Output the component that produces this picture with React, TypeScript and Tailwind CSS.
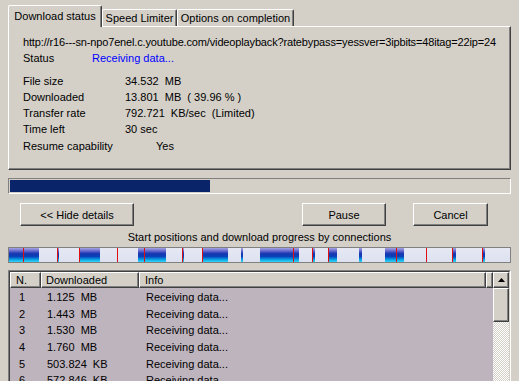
import React from "react";

const raised =
  "bg-[#d4d0c8] border-t border-l border-t-white border-l-white border-r border-b border-r-[#404040] border-b-[#404040] shadow-[inset_-1px_-1px_0_#808080]";

const blue: [number, number][] = [
  [9, 39], [57, 59], [79, 100], [138, 166], [182, 184], [202, 228], [241, 243],
  [260, 299], [312, 315], [328, 337], [359, 362], [385, 404], [452, 456], [482, 485],
];
const red = [23, 57, 79, 117, 144, 182, 202, 293, 312, 328, 396, 426, 452, 482];

function SegBar() {
  return (
    <svg width="503" height="16" viewBox="0 0 503 16" className="block">
      <defs>
        <linearGradient id="bl" x1="0" y1="0" x2="0" y2="1">
          <stop offset="0" stopColor="#a4a4e4" />
          <stop offset="0.2" stopColor="#6a6ad0" />
          <stop offset="0.4" stopColor="#1838b0" />
          <stop offset="0.6" stopColor="#0a40b8" />
          <stop offset="0.8" stopColor="#0898e0" />
          <stop offset="1" stopColor="#30d8f8" />
        </linearGradient>
        <linearGradient id="lt" x1="0" y1="0" x2="0" y2="1">
          <stop offset="0" stopColor="#e6e8f4" />
          <stop offset="1" stopColor="#dde1ef" />
        </linearGradient>
      </defs>
      <rect x="0.5" y="0.5" width="502" height="15" fill="url(#lt)" stroke="#808080" />
      {blue.map(([a, b], i) => (
        <rect key={i} x={a - 8} y={1} width={b - a} height={14} fill="url(#bl)" />
      ))}
      {red.map((x, i) => (
        <rect key={"r" + i} x={x - 8} y={1} width={1} height={14} fill="#e01010" />
      ))}
    </svg>
  );
}

const rows = [
  ["1", "1.125  MB"],
  ["2", "1.443  MB"],
  ["3", "1.530  MB"],
  ["4", "1.760  MB"],
  ["5", "503.824  KB"],
  ["6", "572.846  KB"],
];

export default function App() {
  return (
    <div className="w-[519px] h-[381px] overflow-hidden bg-[#d4d0c8] text-[11px] leading-[16px] text-black font-['Liberation_Sans',Arial,sans-serif]">
      {/* tabs */}
      <div className="flex items-end pl-[8px] h-[26px] relative z-10">
        <div className="w-[94px] h-[22px] -mb-[1px] bg-[#d4d0c8] border-t border-l border-t-white border-l-white border-r border-r-[#404040] shadow-[inset_-1px_0_0_#808080] rounded-tl-[2px] rounded-tr-[2px] pt-[2px] text-center whitespace-nowrap">
          Download status
        </div>
        <div className="w-[75px] h-[17px] bg-[#d4d0c8] border-t border-l border-t-white border-l-white border-r border-r-[#404040] shadow-[inset_-1px_0_0_#808080] rounded-tl-[2px] rounded-tr-[2px] text-center whitespace-nowrap">
          Speed Limiter
        </div>
        <div className="w-[117px] h-[17px] bg-[#d4d0c8] border-t border-l border-t-white border-l-white border-r border-r-[#404040] shadow-[inset_-1px_0_0_#808080] rounded-tl-[2px] rounded-tr-[2px] text-center whitespace-nowrap">
          Options on completion
        </div>
      </div>

      {/* panel */}
      <div className={"mx-[8px] h-[144px] pt-[7px] pl-[14px] " + raised}>
        <div className="h-[16px] whitespace-nowrap tracking-[-0.15px]">
          http://r16---sn-npo7enel.c.youtube.com/videoplayback?ratebypass=yessver=3ipbits=48itag=22ip=24
        </div>
        <div className="h-[15px] flex whitespace-nowrap">
          <div className="w-[69px]">Status</div>
          <div className="text-[#0000ff]">Receiving data...</div>
        </div>
        <div className="mt-[8px]">
          {[
            ["File size", "34.532  MB"],
            ["Downloaded", "13.801  MB  ( 39.96 % )"],
            ["Transfer rate", "792.721  KB/sec  (Limited)"],
            ["Time left", "30 sec"],
          ].map(([k, v]) => (
            <div key={k} className="h-[16px] flex whitespace-pre">
              <div className="w-[102px]">{k}</div>
              <div>{v}</div>
            </div>
          ))}
          <div className="h-[16px] mt-[1px] flex whitespace-pre">
            <div className="w-[133px]">Resume capability</div>
            <div>Yes</div>
          </div>
        </div>
      </div>

      {/* progress */}
      <div className="mx-[8px] mt-[8px] h-[16px] border-t border-l border-t-[#808080] border-l-[#808080] border-r border-b border-r-white border-b-white p-[1px]">
        <div className="w-[200px] h-full bg-[#0a246a]" />
      </div>

      {/* buttons */}
      <div className="flex pl-[20px] mt-[9px]">
        <div className={"w-[114px] h-[23px] flex items-center justify-center " + raised}>&lt;&lt; Hide details</div>
        <div className={"w-[84px] h-[23px] ml-[168px] flex items-center justify-center " + raised}>Pause</div>
        <div className={"w-[75px] h-[23px] ml-[27px] flex items-center justify-center " + raised}>Cancel</div>
      </div>

      <div className="mt-[3px] h-[16px] text-center">Start positions and download progress by connections</div>

      <div className="mx-[8px] mt-[2px]">
        <SegBar />
      </div>

      {/* table */}
      <div className="mx-[8px] mt-[7px] border-t border-l border-t-[#808080] border-l-[#808080] border-r border-r-white h-[120px]">
        <div className="border-t border-l border-t-[#404040] border-l-[#404040] border-r border-r-[#d4d0c8] h-full flex">
          <div className="flex-1 bg-[#beb4be] flex flex-col">
            <div className="flex h-[16px]">
              <div className={"w-[31px] pl-[5px] " + raised + " leading-[14px]"}>N.</div>
              <div className={"w-[98px] pl-[4px] " + raised + " leading-[14px]"}>Downloaded</div>
              <div className={"w-[347px] pl-[5px] " + raised + " leading-[14px]"}>Info</div>
              <div className={"flex-1 " + raised} />
            </div>
            <div className="pt-[1px]">
              {rows.map(([n, d]) => (
                <div key={n} className="flex h-[16.67px] leading-[16px] whitespace-pre">
                  <div className="w-[31px] pl-[9px]">{n}</div>
                  <div className="w-[98px] pl-[6px]">{d}</div>
                  <div className="pl-[7px]">Receiving data...</div>
                </div>
              ))}
            </div>
          </div>
          <div className="w-[16px] flex flex-col">
            <div className={"h-[16px] flex items-center justify-center " + raised}>
              <svg width="7" height="4" viewBox="0 0 7 4">
                <path d="M3.5 0 L7 4 L0 4 Z" fill="#000" />
              </svg>
            </div>
            <div className={"h-[34px] " + raised} />
            <div className="flex-1 bg-[repeating-conic-gradient(#ffffff_0_25%,#d4d0c8_0_50%)] bg-[length:2px_2px]" />
          </div>
        </div>
      </div>
    </div>
  );
}
